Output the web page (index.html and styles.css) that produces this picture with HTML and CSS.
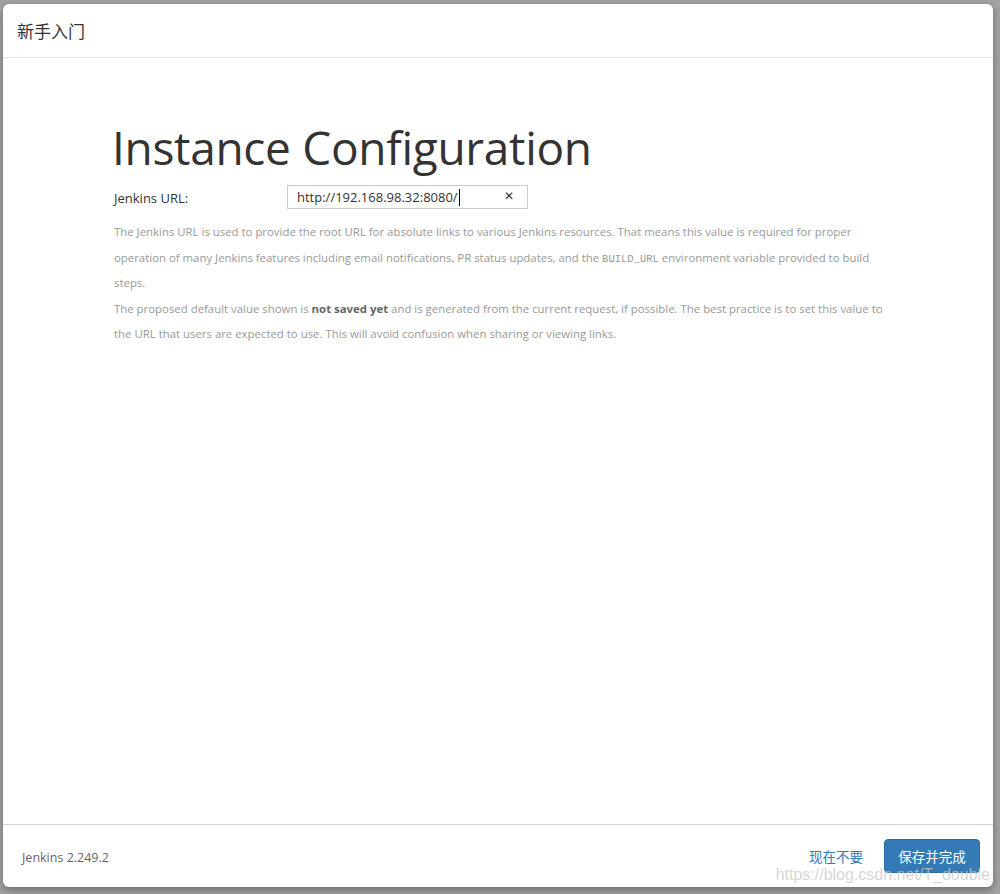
FILE: index.html
```html
<!DOCTYPE html>
<html lang="zh">
<head>
<meta charset="utf-8">
<title>新手入门</title>
<link rel="stylesheet" href="styles.css">
</head>
<body>
<div class="modal">
  <div class="modal-header">
    <h4 class="modal-title">新手入门</h4>
  </div>
  <div class="modal-body">
    <div class="config">
      <h1 class="heading">Instance Configuration</h1>
      <div class="form-row">
        <label class="label">Jenkins URL:</label>
        <div class="input">
          <span class="input-value">http://192.168.98.32:8080/</span><span class="caret"></span>
          <span class="clear">✕</span>
        </div>
      </div>
      <div class="help">
        <p>The Jenkins URL is used to provide the root URL for absolute links to various Jenkins resources. That means this value is required for proper operation of many Jenkins features including email notifications, PR status updates, and the <code>BUILD_URL</code> environment variable provided to build steps.</p>
        <p>The proposed default value shown is <strong>not saved yet</strong> and is generated from the current request, if possible. The best practice is to set this value to the URL that users are expected to use. This will avoid confusion when sharing or viewing links.</p>
      </div>
    </div>
  </div>
  <div class="modal-footer">
    <div class="version">Jenkins 2.249.2</div>
    <div class="actions">
      <a class="skip">现在不要</a>
      <button class="btn-primary">保存并完成</button>
    </div>
  </div>
  <div class="watermark">https://blog.csdn.net/T_double</div>
</div>
</body>
</html>
```
FILE: styles.css
```css
html, body {
  margin: 0;
  padding: 0;
  height: 100%;
}
body {
  background: #a3a3a3;
  font-family: "Open Sans", "Noto Sans CJK SC", sans-serif;
  color: #333;
  overflow: hidden;
}
.modal {
  position: relative;
  box-sizing: border-box;
  margin: 4px 0 0 3px;
  width: 990px;
  height: 883px;
  background: #fff;
  border-radius: 6px;
  box-shadow: 0 3px 8px rgba(0,0,0,0.35);
  display: flex;
  flex-direction: column;
}
.modal-header {
  height: 54px;
  border-bottom: 1px solid #e5e5e5;
  display: flex;
  align-items: center;
  padding-left: 14px;
  box-sizing: border-box;
}
.modal-title {
  margin: 0;
  font-family: "Noto Sans CJK SC", sans-serif;
  font-weight: normal;
  font-size: 17px;
  color: #333;
}
.modal-body {
  flex: 1;
}
.config {
  margin-left: 109px;
  width: 775px;
  padding-top: 56px;
}
.heading {
  margin: 0;
  font-weight: normal;
  font-size: 46px;
  line-height: 66px;
  color: #333;
  letter-spacing: -0.3px;
}
.form-row {
  display: flex;
  align-items: center;
  margin-top: 5px;
}
.label {
  width: 173px;
  padding-left: 2px;
  padding-top: 2px;
  font-size: 13px;
  color: #333;
}
.input {
  box-sizing: border-box;
  width: 241px;
  height: 24px;
  border: 1px solid #ccc;
  display: flex;
  align-items: center;
  padding-left: 9px;
  font-size: 13px;
  color: #333;
  position: relative;
}
.caret {
  display: inline-block;
  width: 1px;
  height: 17px;
  background: #000;
  margin-left: 1px;
}
.clear {
  position: absolute;
  right: 13px;
  top: 3px;
  font-size: 12px;
  color: #333;
  font-family: "DejaVu Sans", sans-serif;
}
.help {
  margin-top: 10px;
  padding-left: 2px;
  font-size: 11.4px;
  line-height: 25.5px;
  color: #999;
}
.help p {
  margin: 0;
}
.help code {
  font-family: "Liberation Mono", monospace;
  font-size: 10.5px;
  line-height: 1;
  color: #999;
}
.help strong {
  color: #666;
  font-weight: bold;
  line-height: 1;
}
.modal-footer {
  height: 63px;
  border-top: 1px solid #d0d0d0;
  display: flex;
  align-items: center;
  justify-content: space-between;
  padding: 2px 13px 0 19px;
  box-sizing: border-box;
}
.version {
  font-size: 12.5px;
  color: #666;
}
.actions {
  display: flex;
  align-items: center;
  gap: 21px;
  margin-top: -2px;
}
.skip {
  font-family: "Noto Sans CJK SC", sans-serif;
  font-size: 13.5px;
  color: #337ab7;
}
.btn-primary {
  font-family: "Noto Sans CJK SC", sans-serif;
  font-size: 13.5px;
  color: #fff;
  background: #337ab7;
  border: 1px solid #2e6da4;
  border-radius: 4px;
  width: 96px;
  height: 34px;
  padding: 0;
}
.watermark {
  position: absolute;
  right: 3px;
  bottom: 3px;
  font-family: "Liberation Sans", sans-serif;
  font-size: 16px;
  color: rgba(200,200,200,0.75);
  pointer-events: none;
}
```
